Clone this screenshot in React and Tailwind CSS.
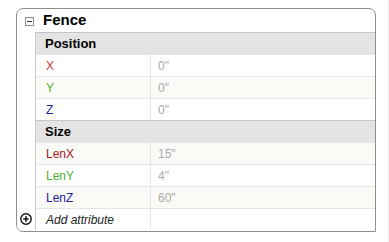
import React from 'react';

const rows = [
  { type: 'header', label: 'Position' },
  { label: 'X', value: '0"', color: 'text-[#c0393b]' },
  { label: 'Y', value: '0"', color: 'text-[#4caf2a]' },
  { label: 'Z', value: '0"', color: 'text-[#23209a]' },
  { type: 'header', label: 'Size' },
  { label: 'LenX', value: '15"', color: 'text-[#a3171b]' },
  { label: 'LenY', value: '4"', color: 'text-[#4caf2a]' },
  { label: 'LenZ', value: '60"', color: 'text-[#23209a]' },
  { type: 'add', label: 'Add attribute' },
];

const MinusBox = () => (
  <svg width="9" height="9" viewBox="0 0 9 9">
    <rect x="0.5" y="0.5" width="8" height="8" fill="#fff" stroke="#8a8a8a" />
    <path d="M2 4.5h5" stroke="#333" />
  </svg>
);

const PlusCircle = () => (
  <svg width="12" height="12" viewBox="0 0 12 12">
    <circle cx="6" cy="6" r="5.2" fill="#fff" stroke="#111" strokeWidth="1.4" />
    <path d="M3.3 6h5.4M6 3.3v5.4" stroke="#111" strokeWidth="1.6" />
  </svg>
);

export default function App() {
  let n = 0;
  return (
    <div className="w-[389px] h-[242px] bg-white border-r border-[#ececec] pl-[16px] pt-[8px] font-['Liberation_Sans',Arial,sans-serif]">
      <div className="w-[360px] h-[224px] border border-[#8f8f8f] rounded-tl-[7px] rounded-tr-[7px] rounded-bl-[7px] flex flex-col overflow-hidden">
        <div className="h-[23px] flex items-center">
          <div className="w-[18px] flex justify-end pr-[1px] pt-[1px]">
            <MinusBox />
          </div>
          <span className="ml-[8px] text-[15px] font-bold text-black">Fence</span>
        </div>
        <div className="flex flex-col">
          {rows.map((r, i) => {
            if (r.type === 'header') {
              return (
                <div key={i} className="flex h-[22px]">
                  <div className="w-[18px] bg-white" />
                  <div className="flex-1 flex items-center bg-[#e4e4e4] border-t border-[#c4c4c4] border-l border-l-[#c8c8c8] pl-[9px] text-[13px] font-bold text-black">
                    {r.label}
                  </div>
                </div>
              );
            }
            const odd = n++ % 2 === 1;
            return (
              <div key={i} className="flex h-[22px]">
                <div className="w-[18px] bg-white flex items-center justify-center pr-[1px]">
                  {r.type === 'add' && <PlusCircle />}
                </div>
                <div className={`flex-1 flex border-t border-[#e6e6e6] border-l border-l-[#c8c8c8] text-[12px] ${odd ? 'bg-[#fafaf7]' : 'bg-white'}`}>
                  <div className={`w-[115px] flex items-center pl-[10px] border-r border-[#e6e6e6] ${r.type === 'add' ? 'italic text-[#222]' : r.color}`}>
                    {r.label}
                  </div>
                  <div className="flex-1 flex items-center pl-[7px] text-[#a8a8a8]">
                    {r.value}
                  </div>
                </div>
              </div>
            );
          })}
        </div>
      </div>
    </div>
  );
}
